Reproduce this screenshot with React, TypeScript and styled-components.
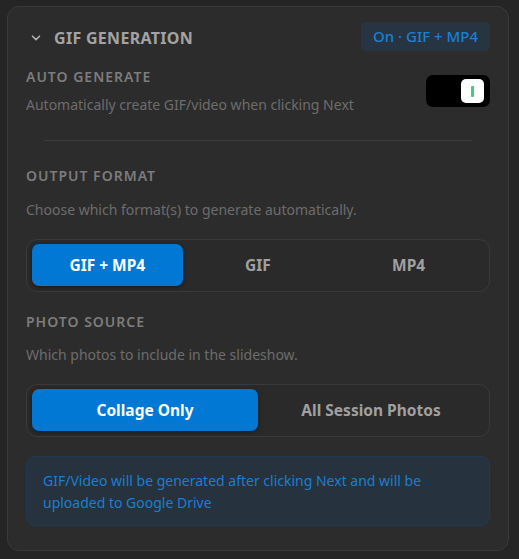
import React, { useState } from 'react'
import styled, { createGlobalStyle } from 'styled-components'

const GlobalStyle = createGlobalStyle`
  html, body {
    margin: 0;
    padding: 0;
    background: #252525;
  }
  body {
    font-family: 'Noto Sans', 'Open Sans', sans-serif;
  }
`

const Page = styled.div`
  padding: 6px 10px 8px 7px;
`

const Card = styled.section`
  display: flex;
  flex-direction: column;
  padding: 15px 18px 24px 18px;

  border: 1px solid #3a3a3a;
  border-radius: 12px;
  background-color: #2c2c2c;
`

const Header = styled.div`
  display: flex;
  align-items: center;
  justify-content: space-between;
  margin-bottom: 16px;
`

const Title = styled.h2`
  display: flex;
  align-items: center;
  gap: 12px;
  margin: 2px 0 0 0;
  padding-left: 4px;

  color: #a3a3a3;
  font-size: 16px;
  font-weight: 700;
  letter-spacing: 0.3px;
`

const Badge = styled.span`
  padding: 5px 12px;
  border-radius: 5px;
  background-color: #263541;
  color: #1a80d6;
  font-size: 15px;
  line-height: 19px;
  font-weight: 500;
`

const Row = styled.div`
  display: flex;
  align-items: center;
  justify-content: space-between;
`

const Label = styled.div<{ gap?: number }>`
  margin-bottom: ${(p) => p.gap ?? 8}px;
  color: #7c7c7c;
  font-size: 14px;
  line-height: 20px;
  font-weight: 600;
  letter-spacing: 1px;
  text-transform: uppercase;
`

const Hint = styled.p<{ gap?: number }>`
  margin: 0 0 ${(p) => p.gap ?? 0}px 0;
  color: #6c6c6c;
  font-size: 14px;
  line-height: 20px;
`

const Toggle = styled.button`
  position: relative;
  width: 64px;
  height: 32px;
  padding: 0;
  border: none;
  border-radius: 7px;
  background-color: #000;
  cursor: pointer;
`

const Knob = styled.span`
  position: absolute;
  top: 4px;
  right: 6px;
  display: flex;
  align-items: center;
  justify-content: center;
  width: 23px;
  height: 24px;
  border-radius: 5px;
  background-color: #fff;

  &::after {
    content: '';
    width: 3px;
    height: 11px;
    border-radius: 1px;
    background-color: #3ccf7c;
  }
`

const Divider = styled.hr`
  margin: 25px 18px 25px;
  border: none;
  border-top: 1px solid #3d3d3d;
`

const Segmented = styled.div<{ cols: number }>`
  display: grid;
  grid-template-columns: repeat(${(p) => p.cols}, 1fr);
  padding: 4px 5px 5px;
  margin-bottom: ${(p) => (p.cols === 3 ? 20 : 19)}px;

  border: 1px solid #3a3a3a;
  border-radius: 11px;
  background-color: #2a2a2a;
`

const Segment = styled.button<{ active: boolean }>`
  height: 42px;
  border: none;
  border-radius: 7px;
  background-color: ${(p) => (p.active ? '#0078d4' : 'transparent')};
  box-shadow: ${(p) => (p.active ? '0 1px 4px rgba(0,0,0,0.45)' : 'none')};
  color: ${(p) => (p.active ? '#ffffff' : '#a0a0a0')};

  font-family: inherit;
  font-size: 15.5px;
  font-weight: 700;
  cursor: pointer;
`

const Info = styled.div`
  padding: 13px 16px 11px;
  border: 1px solid #1f3a52;
  border-radius: 9px;
  background-color: #26323d;
  color: #1a7fd4;
  font-size: 14px;
  line-height: 22px;
`

const Chevron = () => (
  <svg width='12' height='12' viewBox='0 0 12 12' fill='none'>
    <path d='M2.5 4.2 L6 7.6 L9.5 4.2' stroke='#b0b0b0' strokeWidth='1.6' strokeLinecap='round' strokeLinejoin='round' />
  </svg>
)

const App = () => {
  const [format, setFormat] = useState('GIF + MP4')
  const [source, setSource] = useState('Collage Only')

  return (
    <Page>
      <GlobalStyle />
      <Card>
        <Header>
          <Title>
            <Chevron />
            GIF GENERATION
          </Title>
          <Badge>On · GIF + MP4</Badge>
        </Header>

        <Row>
          <div>
            <Label>Auto Generate</Label>
            <Hint>Automatically create GIF/video when clicking Next</Hint>
          </div>
          <Toggle aria-label='Auto generate'>
            <Knob />
          </Toggle>
        </Row>

        <Divider />

        <Label gap={14}>Output Format</Label>
        <Hint gap={19}>Choose which format(s) to generate automatically.</Hint>
        <Segmented cols={3}>
          {['GIF + MP4', 'GIF', 'MP4'].map((f) => (
            <Segment key={f} active={format === f} onClick={() => setFormat(f)}>
              {f}
            </Segment>
          ))}
        </Segmented>

        <Label gap={13}>Photo Source</Label>
        <Hint gap={19}>Which photos to include in the slideshow.</Hint>
        <Segmented cols={2}>
          {['Collage Only', 'All Session Photos'].map((s) => (
            <Segment key={s} active={source === s} onClick={() => setSource(s)}>
              {s}
            </Segment>
          ))}
        </Segmented>

        <Info>GIF/Video will be generated after clicking Next and will be uploaded to Google Drive</Info>
      </Card>
    </Page>
  )
}

export default App
